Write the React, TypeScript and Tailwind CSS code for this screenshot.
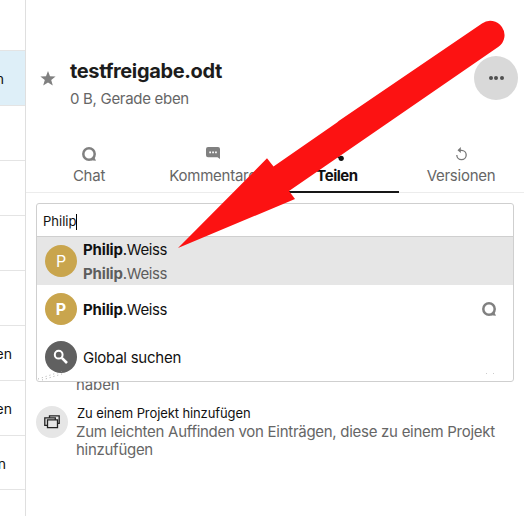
import React from "react";

function ChatIcon() {
  return (
    <svg width="14" height="14" viewBox="0 0 14 14" fill="none" className="block">
      <circle cx="7" cy="7" r="5.700" stroke="#808080" strokeWidth="2.500" />
      <path d="M12 9.500L14 13.700L8.500 13.200Z" fill="#808080" />
    </svg>
  );
}

function CommentIcon() {
  return (
    <svg width="14" height="13" viewBox="0 0 14 13" className="block">
      <path d="M2 0h10a2 2 0 0 1 2 2v10L11.500 10.200H2a2 2 0 0 1-2-2V2a2 2 0 0 1 2-2Z" fill="#808080" />
      <path d="M3.300 4.500h1.700v1.700H3.300zM6.200 4.500h1.700v1.700H6.200zM9.100 4.500h1.700v1.700H9.100z" fill="#fff" />
    </svg>
  );
}

function ShareIcon() {
  return (
    <svg width="14" height="14" viewBox="0 0 14 14" className="block">
      <path d="M11 2.500L3 7l8 4.500" fill="none" stroke="#111" strokeWidth="1.500" />
      <circle cx="11.500" cy="2.500" r="2.400" fill="#111" />
      <circle cx="3" cy="7" r="2.400" fill="#111" />
      <circle cx="11.200" cy="11.300" r="2.600" fill="#111" />
    </svg>
  );
}

function RestoreIcon() {
  return (
    <svg width="14" height="14" viewBox="0 0 14 14" className="block">
      <path d="M5.500 3.300H7.500a4.700 4.700 0 1 1-4.700 4.700" fill="none" stroke="#777" strokeWidth="1.300" />
      <path d="M6.800 .1v6L3.500 3.200Z" fill="#777" />
    </svg>
  );
}

function SearchIcon() {
  return (
    <svg width="16" height="16" viewBox="0 0 16 16" fill="none" className="block">
      <circle cx="5.700" cy="5.700" r="3.900" stroke="#fff" strokeWidth="2" />
      <path d="M8.800 8.800L14 14" stroke="#fff" strokeWidth="2.600" />
    </svg>
  );
}

function ProjectIcon() {
  return (
    <svg width="16" height="14" viewBox="0 0 16 14" className="block" stroke="#222" strokeWidth="1.300">
      <path d="M5.500 .8h9.700v7.500H5.500z" fill="#e6e6e6" />
      <path d="M.8 2.800h10.500v7.500H.8z" fill="#e6e6e6" />
      <path d="M3.500 4.800h10v7.900h-10z" fill="#e6e6e6" />
    </svg>
  );
}

const sideRows = [
  { text: "", cls: "h-[51px]" },
  { text: "n", cls: "h-[55px] bg-[#deeff8] pr-[21px]" },
  { text: "", cls: "h-[55px]" },
  { text: "", cls: "h-[55px]" },
  { text: "", cls: "h-[55px]" },
  { text: "", cls: "h-[55px]" },
  { text: "en", cls: "h-[55px] pr-[13px]" },
  { text: "en", cls: "h-[55px] pr-[13px]" },
  { text: "n", cls: "h-[54px] pr-[19px]" },
];

const tabs = [
  { label: "Chat", icon: <ChatIcon />, cls: "text-[#666] tracking-[-0.25px]" },
  { label: "Kommentare", icon: <CommentIcon />, cls: "text-[#666] tracking-[-0.25px]" },
  { label: "Teilen", icon: <ShareIcon />, cls: "text-[#111] font-bold tracking-[-0.45px]", active: true },
  { label: "Versionen", icon: <RestoreIcon />, cls: "text-[#666] tracking-[-0.25px]" },
];

function Name() {
  return (
    <span className="block whitespace-nowrap tracking-[-0.38px]">
      <b className="font-bold tracking-[-0.15px]">Philip</b>.Weiss
    </span>
  );
}

function Arrow() {
  return (
    <svg className="pointer-events-none absolute inset-0" width="524" height="516" viewBox="0 0 524 516">
      <path
        d="M178 248L267 158.300L273.500 166.500L337 122.500L339 120.800L482 23.500A14.200 14.200 0 0 1 498.500 46.800L289 191L295 199Z"
        fill="#fc1212"
      />
    </svg>
  );
}

export default function App() {
  return (
    <div className="relative flex h-[516px] w-[524px] overflow-hidden bg-white font-[Inter,sans-serif] text-[15px] text-[#111]">
      <aside className="w-[26px] shrink-0 overflow-hidden border-r border-[#dfdfdf]">
        {sideRows.map((r, i) => (
          <div key={i} className={"flex items-center justify-end border-b border-[#e4e4e4] pt-px text-[14px] " + r.cls}>
            {r.text}
          </div>
        ))}
      </aside>
      <main className="w-[498px]">
        <header className="flex h-[140px] pt-[56px] pl-[14px]">
          <svg width="16" height="15" viewBox="0 0 16 15" className="mt-[15px]">
            <path d="M8 0l2 5.300 5.600.2-4.400 3.500 1.600 5.500L8 11.400l-4.800 3.100L4.800 9 .4 5.500 6 5.300Z" fill="#808080" />
          </svg>
          <div className="ml-[14px] grow">
            <h1 className="text-[20px] leading-[30px] font-bold tracking-[-0.37px] whitespace-nowrap text-[#1c1c1c]">testfreigabe.odt</h1>
            <p className="mt-[3px] leading-[20px] tracking-[-0.3px] text-[#666]">0 B, Gerade eben</p>
          </div>
          <button className="mr-[6px] flex size-[44px] items-center justify-center gap-[1.500px] rounded-full bg-[#d9d9d9]">
            <i className="size-[4px] rounded-full bg-[#505050]" />
            <i className="size-[4px] rounded-full bg-[#505050]" />
            <i className="size-[4px] rounded-full bg-[#505050]" />
          </button>
        </header>
        <nav className="flex h-[53px] border-b border-[#ececec] pl-px">
          {tabs.map((t) => (
            <div
              key={t.label}
              className={"flex h-[53px] w-[124px] flex-col items-center pt-[7px] " + (t.active ? "border-b-2 border-[#161616]" : "")}
            >
              <div className="h-[19px]">{t.icon}</div>
              <span className={"leading-[20px] " + t.cls}>{t.label}</span>
            </div>
          ))}
        </nav>
        <section className="relative mx-[10px] mt-[10px] h-[179px] overflow-hidden rounded-[3px] border border-[#cfcfcf] bg-white">
          <div className="flex h-[33px] items-center border-b border-[#cfcfcf] pt-[3px] pl-[6px] text-[13px] tracking-[0.02px]">
            Philip<i className="-ml-[0.500px] h-[16px] w-px bg-black" />
          </div>
          <div className="flex h-[48px] items-center bg-[#e6e6e6] pl-[8px]">
            <span className="flex size-[32px] items-center justify-center rounded-full bg-[#c9a54d] text-[16px] text-white">P</span>
            <div className="ml-[6px] pt-[2px] leading-[24px]">
              <Name />
              <div className="text-[#5d5d5d]"><Name /></div>
            </div>
          </div>
          <div className="flex h-[48px] items-center pl-[8px]">
            <span className="flex size-[32px] items-center justify-center rounded-full bg-[#c9a54d] text-[16px] font-bold text-white">P</span>
            <div className="ml-[6px] grow pt-[2px]"><Name /></div>
            <div className="mr-[17px]"><ChatIcon /></div>
          </div>
          <div className="flex h-[48px] items-center pl-[8px]">
            <span className="flex size-[32px] items-center justify-center rounded-full bg-[#606060]"><SearchIcon /></span>
            <span className="ml-[6px] pt-[2px] tracking-[-0.25px]">Global suchen</span>
          </div>
          <svg width="30" height="10" viewBox="0 0 30 10" className="absolute bottom-0 left-0">
            <path d="M1 8L26 0M5 9L28 2" stroke="#999" strokeWidth=".8" strokeDasharray="1 3" />
          </svg>
          <div className="absolute right-[19px] bottom-[7px] flex gap-[6px]">
            <i className="size-px bg-[#ccc]" />
            <i className="size-px bg-[#ccc]" />
          </div>
        </section>
        <div className="h-[14px] overflow-hidden pl-[50px] leading-[18px] tracking-[-0.1px] text-[#666]">
          <span className="-mt-[6px] block">haben</span>
        </div>
        <div className="mt-[9px] flex pl-[10px]">
          <span className="mt-px flex size-[32px] shrink-0 items-center justify-center rounded-full bg-[#e6e6e6]"><ProjectIcon /></span>
          <div className="ml-[8px]">
            <p className="-mt-px mb-px pl-px text-[13px] leading-[18px] tracking-[-0.1px]">Zu einem Projekt hinzufügen</p>
            <p className="leading-[18px] tracking-[-0.28px] whitespace-nowrap text-[#666]">
              Zum leichten Auffinden von Einträgen, diese zu einem Projekt
              <br />
              hinzufügen
            </p>
          </div>
        </div>
      </main>
      <Arrow />
    </div>
  );
}
